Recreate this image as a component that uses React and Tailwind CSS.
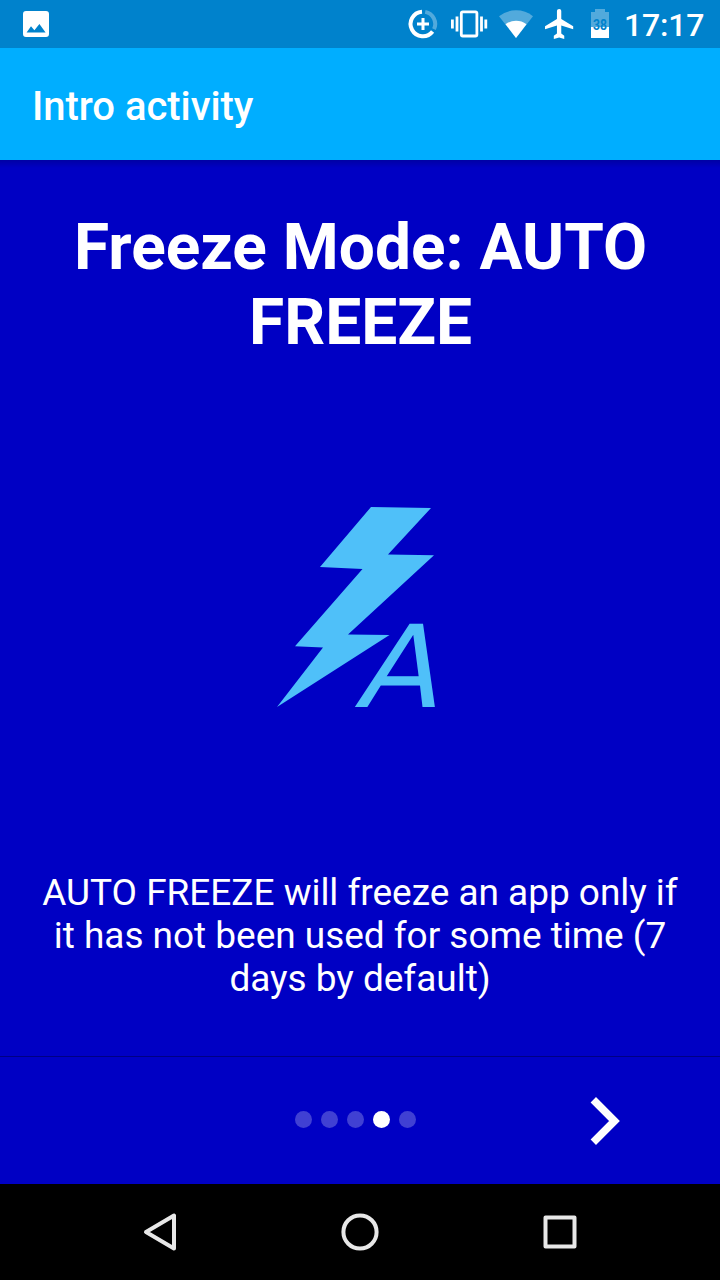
import React from "react";

function StatusBar() {
  return (
    <div className="flex h-12 shrink-0 items-center bg-[#0082cc] text-white">
      <svg className="ml-[23px] h-[26px] w-[26px]" viewBox="0 0 26 26">
        <path fill="#fff" fillRule="evenodd" d="M3 0H23A3 3 0 0 1 26 3V23A3 3 0 0 1 23 26H3A3 3 0 0 1 0 23V3A3 3 0 0 1 3 0ZM3.6 21.4H22.6L16.4 13L11.4 19.2L8 15.2Z" />
      </svg>
      <svg className="ml-auto h-12 w-[212px]" viewBox="404 0 212 48" fill="none">
        <path d="M422 11.7A12.3 12.3 0 1 0 432.6 31.5" stroke="#fff" strokeWidth="4" />
        <path d="M425.2 11.9A12.3 12.3 0 0 1 434 29.2" stroke="#fff" strokeOpacity=".32" strokeWidth="4" />
        <path d="M423 18V30M417 24H429" stroke="#fff" strokeWidth="3" />
        <rect x="461.3" y="11.8" width="15.6" height="24.2" rx="1.5" stroke="#fff" strokeWidth="2.8" />
        <path d="M457 16.5V31.5M481.5 16.5V31.5" stroke="#fff" strokeWidth="2.8" />
        <path d="M452.4 19.5V28.5M485.8 19.5V28.5" stroke="#fff" strokeWidth="2.8" />
        <path d="M516 38L499 16.2A27.5 27.5 0 0 1 533 16.2Z" fill="#fff" fillOpacity=".32" />
        <path d="M516 38L505.5 24.2A18 18 0 0 1 526.5 24.2Z" fill="#fff" />
        <path transform="translate(541.6 5.8) scale(1.49 1.46)" fill="#fff" d="M21.2 16v-2l-8-5V3.7c0-.9-.6-1.5-1.4-1.5s-1.5.6-1.5 1.5V9l-8 5v2l8-2.5V19l-2.1 1.5V22.7l3.6-1 3.4 1v-2.2l-2-1.5v-5.5z" />
        <path d="M591 12H595V9H605V12H609V27H591Z" fill="#fff" fillOpacity=".32" />
        <path d="M591 27H609V38H591Z" fill="#fff" />
        <text x="600" y="30.2" textAnchor="middle" fill="#0082cc" fontSize="14" fontWeight="700" textLength="14" lengthAdjust="spacingAndGlyphs" className="font-['Roboto',sans-serif]">38</text>
      </svg>
      <span className="ml-2 w-24 pt-[2px] text-[32px] leading-[46px] font-medium tracking-[-0.2px]">17:17</span>
    </div>
  );
}

function Illustration() {
  return (
    <svg className="mr-[6px] h-[200px] w-[160px] self-center" viewBox="277 507 160 200" overflow="visible">
      <path fill="#4fc0f9" d="M371 507L431 508L388 554.5L434 555.2L348 634.5L389.5 635L277 707L323 647.5L295 646.2L362.5 569L320 567Z" />
      <text transform="translate(361.2 707) skewX(-3) scale(1.04 .995)" fill="#4fc0f9" fontSize="115" fontStyle="italic" className="font-['DejaVu_Sans',sans-serif]">A</text>
    </svg>
  );
}

function PageDots({ count, current }) {
  return (
    <div className="flex gap-[9px]">
      {Array.from({ length: count }, (_, i) => (
        <span key={i} className={i === current ? "h-[17px] w-[17px] rounded-full bg-white" : "h-[17px] w-[17px] rounded-full bg-white/25"} />
      ))}
    </div>
  );
}

function NavigationBar() {
  return (
    <nav className="flex h-24 shrink-0 items-center justify-center gap-[152px] bg-black">
      <svg className="h-12 w-12" viewBox="136 1208 48 48" fill="none" stroke="#e8e8e8" strokeWidth="4" strokeLinejoin="round">
        <path d="M174 1215.5V1248.5L146 1232Z" />
      </svg>
      <svg className="h-12 w-12" viewBox="336 1208 48 48" fill="none" stroke="#e8e8e8" strokeWidth="4">
        <circle cx="360" cy="1232" r="16.6" />
      </svg>
      <svg className="h-12 w-12" viewBox="536 1208 48 48" fill="none" stroke="#e8e8e8" strokeWidth="4" strokeLinejoin="round">
        <rect x="545.5" y="1217.5" width="29" height="29" />
      </svg>
    </nav>
  );
}

export default function App() {
  return (
    <div className="flex h-[1280px] w-[720px] flex-col overflow-hidden bg-[#0000c4] font-['Roboto',sans-serif] text-white">
      <StatusBar />
      <header className="flex h-28 shrink-0 items-center bg-[#00aeff] pt-[5px] pl-8">
        <h1 className="text-[40px] leading-[47px] font-medium tracking-[-0.05px]">Intro activity</h1>
      </header>
      <main className="flex h-[896px] shrink-0 flex-col bg-linear-to-b from-[#0000a4] to-[#0000c4] to-[8px] text-center">
        <h2 className="mt-[50px] pl-px text-[64px] leading-[75px] font-bold">
          Freeze Mode: AUTO<br />FREEZE
        </h2>
        <div className="flex flex-1 flex-col pt-[147px]">
          <Illustration />
        </div>
        <p className="mb-[56px] text-[37px] leading-[43px] tracking-[-0.03px]">
          AUTO FREEZE will freeze an app only if<br />it has not been used for some time (7<br />days by default)
        </p>
      </main>
      <footer className="grid h-32 shrink-0 grid-cols-3 items-center border-t border-[#000083]">
        <span />
        <div className="flex justify-center pr-[9px] pb-[3px]">
          <PageDots count={5} current={3} />
        </div>
        <svg className="ml-[10px] h-12 w-[30px] justify-self-center" viewBox="590 1097 30 48" fill="none">
          <path d="M593.3 1099.7L614.5 1121L593.3 1142.2" stroke="#fff" strokeWidth="7.6" />
        </svg>
      </footer>
      <NavigationBar />
    </div>
  );
}
